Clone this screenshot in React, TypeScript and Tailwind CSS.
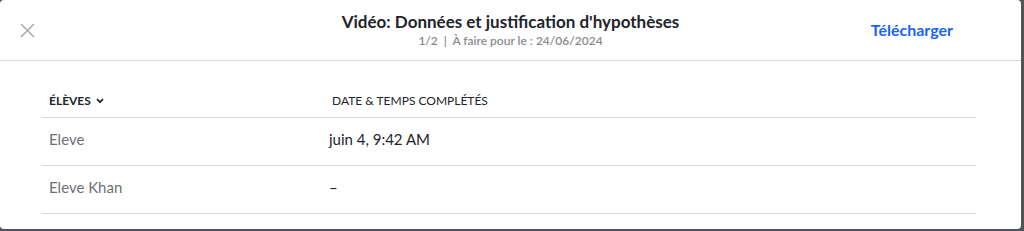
const students = [
  { name: "Eleve", completed: "juin 4, 9:42 AM" },
  { name: "Eleve Khan", completed: "–" },
];

export default function App() {
  return (
    <div className="h-[231px] w-[1024px] bg-[#505357] font-['Lato',sans-serif] overflow-hidden">
      <div className="h-[229px] w-[1021px] bg-white rounded-[4px] overflow-hidden">
        <ModalHeader />
        <div className="ml-[41px] w-[935px] pt-[24px]">
          <div className="grid grid-cols-[283px_1fr] h-[33px] pb-[1px] border-b border-[#dadada] items-center text-[12px] text-[#21242c]">
            <div className="px-2 flex items-center gap-[5px] font-bold">
              ÉLÈVES
              <svg width="8" height="6" viewBox="0 0 8 6" fill="none">
                <path d="M1 1.2 4 4.2 7 1.2" stroke="#21242c" strokeWidth="1.7" />
              </svg>
            </div>
            <div className="px-2">DATE &amp; TEMPS COMPLÉTÉS</div>
          </div>
          {students.map((s) => (
            <div
              key={s.name}
              className="grid grid-cols-[283px_1fr] h-[48px] pb-[4px] border-b border-[#dadada] items-center text-[15px]"
            >
              <div className="px-2 text-[#6f7073]">{s.name}</div>
              <div className="pl-[5px] pr-2 text-[#21242c]">{s.completed}</div>
            </div>
          ))}
        </div>
      </div>
    </div>
  );
}

function ModalHeader() {
  return (
    <div className="h-[61px] border-b border-[#dadada] grid grid-cols-[1fr_auto_1fr] items-center">
      <div className="flex items-center pl-[20px]">
        <button className="w-[15px] h-[15px] flex items-center justify-center">
          <svg width="15" height="15" viewBox="0 0 15 15" fill="none">
            <path d="M1 1 14 14M14 1 1 14" stroke="#a8a9ab" strokeWidth="1.5" />
          </svg>
        </button>
      </div>
      <div className="flex flex-col items-center">
        <p className="text-[17px] font-bold text-[#21242c] leading-[22px] whitespace-nowrap">
          Vidéo: Données et justification d'hypothèses
        </p>
        <p className="text-[12px] font-semibold text-[#8a8b8e] leading-[16px] whitespace-nowrap">
          1/2 &nbsp;|&nbsp; À faire pour le : 24/06/2024
        </p>
      </div>
      <div className="flex justify-end pr-[68px]">
        <a className="text-[16px] font-bold text-[#1865f2] cursor-pointer">Télécharger</a>
      </div>
    </div>
  );
}
